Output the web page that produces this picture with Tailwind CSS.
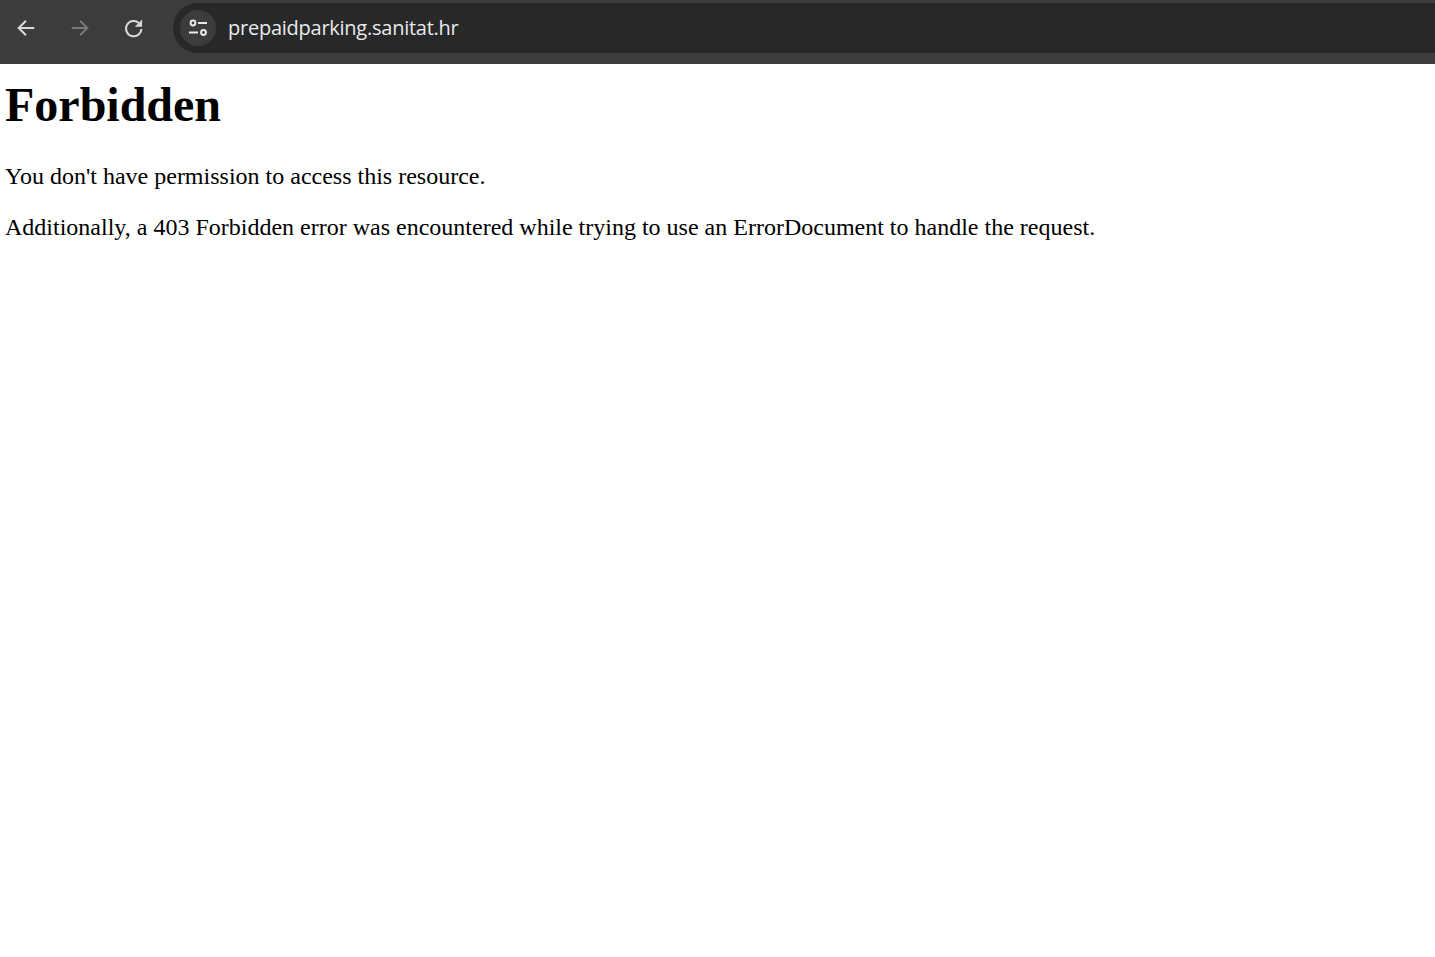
<!DOCTYPE html>
<html lang="en">
  <head>
    <meta charset="utf-8" />
    <title>403 Forbidden</title>
    <script src="https://cdn.jsdelivr.net/npm/@tailwindcss/browser@4"></script>
  </head>
  <body class="bg-white">
    <div class="flex items-start h-16 bg-[#3c3c3c] border-t-[3px] border-[#3c3c3c]">
      <div class="flex items-center h-[50px] w-[173px] shrink-0 text-[#d8d8d8]">
        <svg class="ml-[15px] w-[22px] h-[22px]" viewBox="0 0 24 24" fill="none" stroke="currentColor" stroke-width="2.2"><path d="M21 12H4M12 4l-8 8 8 8" /></svg>
        <svg class="ml-[32px] w-[22px] h-[22px] text-[#787878]" viewBox="0 0 24 24" fill="none" stroke="currentColor" stroke-width="2.2"><path d="M3 12h17M12 4l8 8-8 8" /></svg>
        <svg class="ml-[31px] w-[23px] h-[23px]" viewBox="0 0 24 24" fill="none" stroke="currentColor" stroke-width="2.1"><path d="M20.2 12.5A8 8 0 1 1 17.6 6.2" /><path d="M21 2.5v7.6h-7.6z" fill="currentColor" stroke="none" /></svg>
      </div>
      <div class="flex items-center flex-1 h-[50px] bg-[#282828] rounded-l-[25px] pl-[7px]">
        <div class="flex items-center justify-center w-9 h-9 rounded-full bg-[#3c3c3c]">
          <svg class="w-[24px] h-[24px] text-[#e8e8e8]" viewBox="0 0 24 24" fill="none" stroke="currentColor" stroke-width="2"><circle cx="7" cy="7" r="2.4" /><path d="M12 7h9M3 16.5h9" /><circle cx="17.5" cy="16.5" r="2.4" /></svg>
        </div>
        <span class="ml-[12px] text-[20px] text-[#e8eaed] font-['Open_Sans','Noto_Sans',sans-serif] tracking-[-0.25px]">prepaidparking.sanitat.hr</span>
      </div>
    </div>
    <main class="px-[5px] font-['Liberation_Serif',serif] text-black text-[24px] leading-[27px]">
      <h1 class="text-[48px] leading-[54px] font-bold mt-[14px] mb-[31px]">Forbidden</h1>
      <p class="mb-[24px]">You don't have permission to access this resource.</p>
      <p>Additionally, a 403 Forbidden error was encountered while trying to use an ErrorDocument to handle the request.</p>
    </main>
  </body>
</html>
